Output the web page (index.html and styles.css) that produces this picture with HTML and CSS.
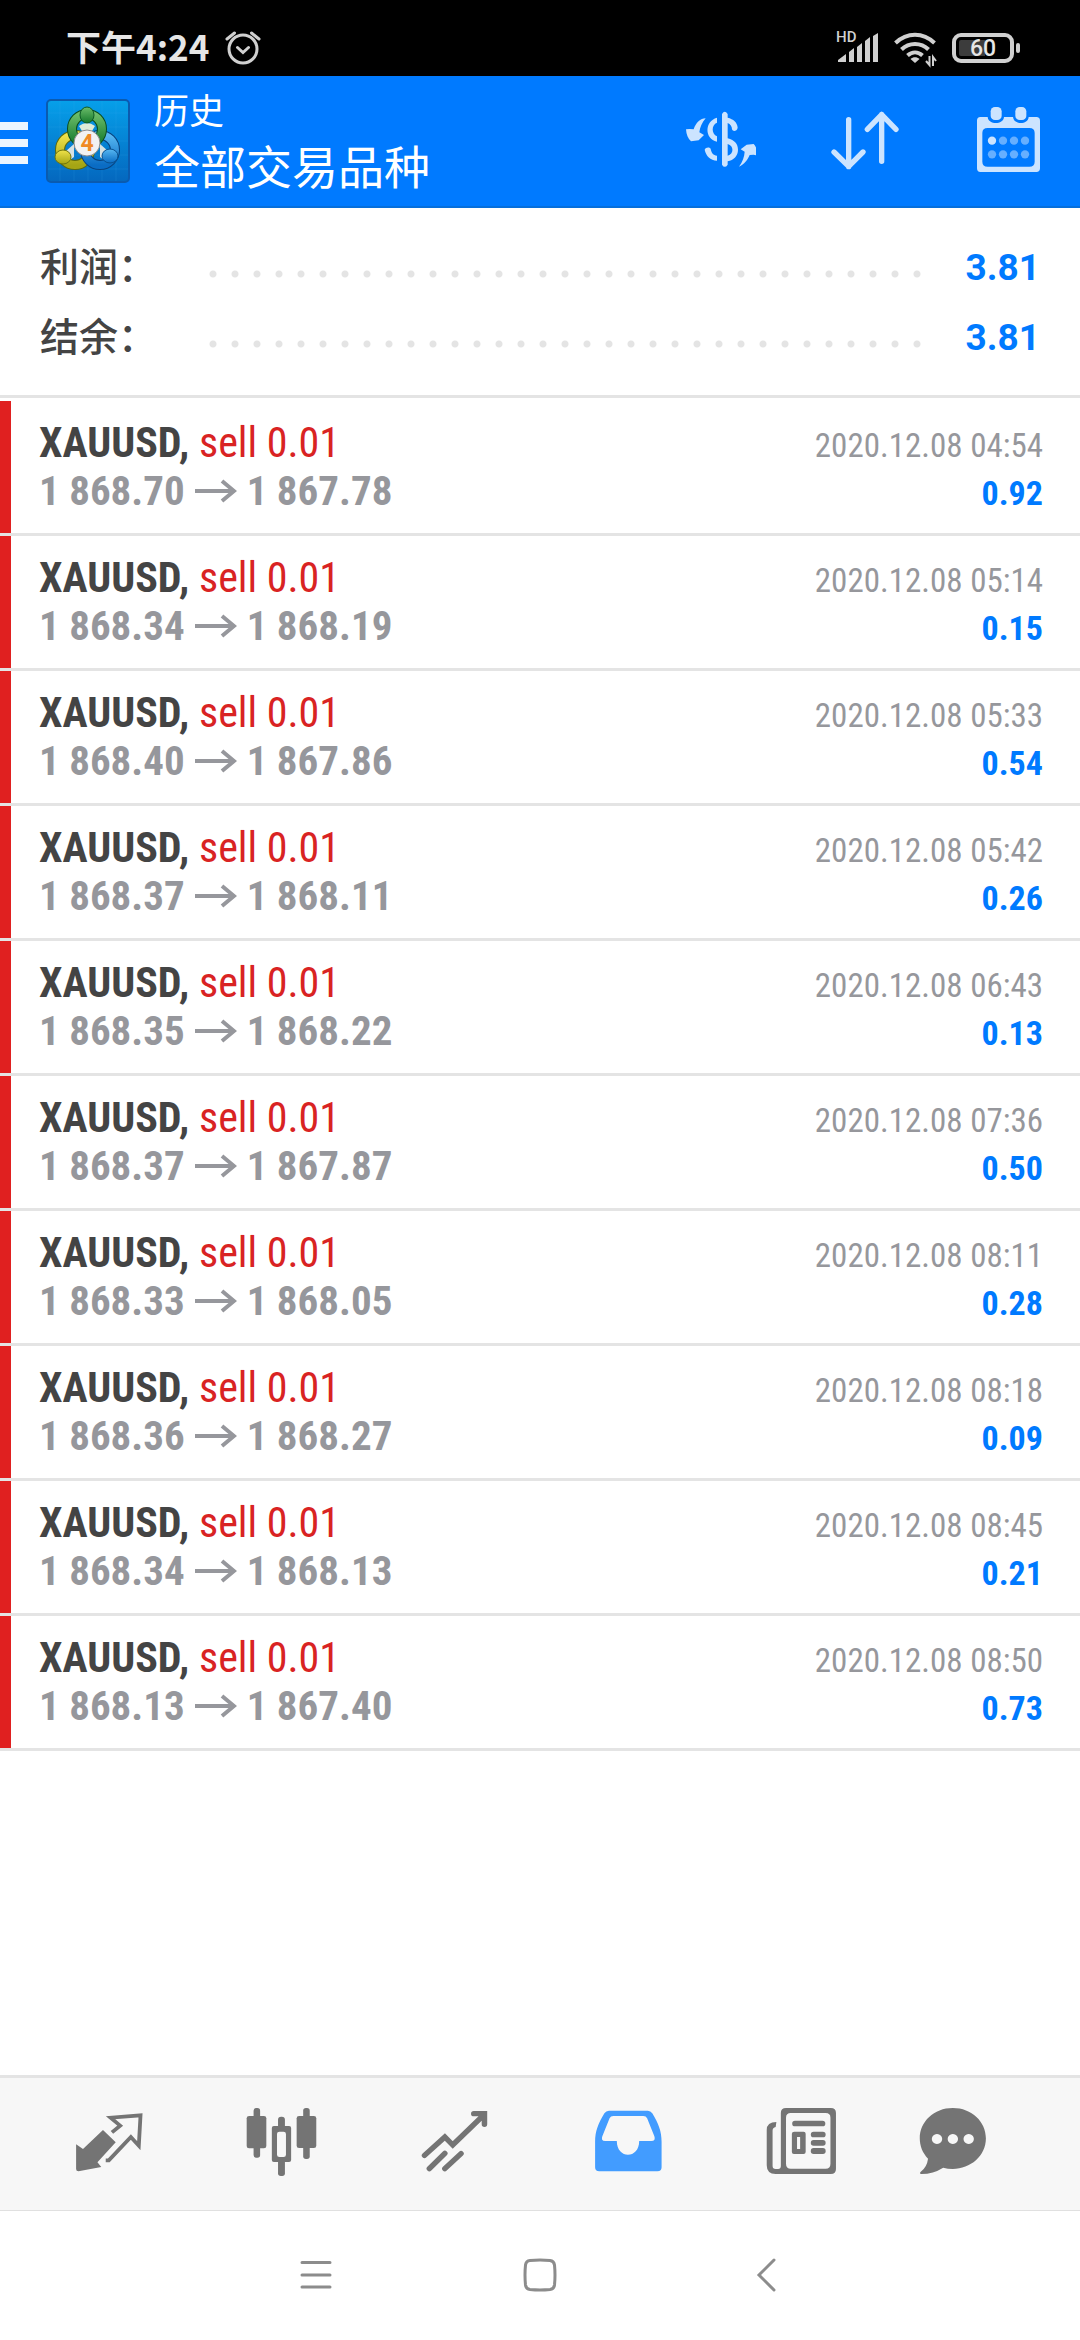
FILE: index.html
```html
<!DOCTYPE html>
<html lang="zh-CN">
<head>
<meta charset="utf-8">
<meta name="viewport" content="width=device-width, initial-scale=1">
<title>历史</title>
<link rel="stylesheet" href="styles.css">
</head>
<body>
<svg class="defs" aria-hidden="true">
  <symbol id="arrow" viewBox="0 0 42 24">
    <path d="M0 12H39M27 2L39 12L27 22" fill="none" stroke="currentColor" stroke-width="4"/>
  </symbol>
</svg>
<div class="screen">
  <div class="status">
    <span class="clock">下午4:24</span>
    <svg class="alarm" viewBox="0 0 36 36" fill="none" stroke="#d0d0d0" stroke-width="3" stroke-linecap="round">
      <circle cx="18" cy="19" r="14"/>
      <path d="M12.500 17.500L18 22.500L23.500 17.500M2 9L9.500 3M26.500 3L34 9"/>
    </svg>
    <div class="indicators">
      <svg class="signal" viewBox="0 0 43 40" fill="#d0d0d0">
        <text class="hd" x="0" y="14">HD</text>
        <path d="M2 32L10 26V34H2ZM13 24L18 20V34H13ZM21 19L26 15V34H21ZM29 13L34 9V34H29ZM37 8L42 5V34H37Z"/>
      </svg>
      <svg class="wifi" viewBox="0 0 43 40" fill="none" stroke="#d0d0d0" stroke-width="4">
        <path d="M1.500 15C13 4 29 4 40.500 15M7.500 21.500C15 14 27 14 34.500 21.500M13.500 27.500C18 23.500 24 23.500 28.500 27.500"/>
        <path d="M21 35L16.500 31C19 28.500 23 28.500 25.500 31Z" fill="#d0d0d0" stroke="none"/>
        <path d="M35.500 28V37L32 33M39 38V29L42 33" stroke-width="2"/>
      </svg>
      <svg class="battery" viewBox="0 0 69 40">
        <rect x="2" y="7" width="58" height="26" rx="7" fill="none" stroke="#d0d0d0" stroke-width="4"/>
        <path d="M9 12H33V28H9Q7 28 7 26V14Q7 12 9 12Z" fill="#3c3c3c"/>
        <rect x="64" y="15" width="4" height="10" rx="2" fill="#d0d0d0"/>
        <text class="level" x="31" y="28" text-anchor="middle">60</text>
      </svg>
    </div>
  </div>

  <header class="appbar">
    <button class="menu" aria-label="菜单"><span></span><span></span><span></span></button>
    <svg class="logo" viewBox="0 0 84 84">
      <defs>
        <linearGradient id="sky" x1="0" y1="0" x2="0" y2="1"><stop offset="0" stop-color="#06a0ea"/><stop offset="1" stop-color="#0467be"/></linearGradient>
        <linearGradient id="green" x1="0" y1="0" x2="0" y2="1"><stop offset="0" stop-color="#6cbd6a"/><stop offset="1" stop-color="#157a2c"/></linearGradient>
        <linearGradient id="yellow" x1="0" y1="0" x2="0" y2="1"><stop offset="0" stop-color="#f0e24a"/><stop offset="1" stop-color="#a5a514"/></linearGradient>
        <linearGradient id="blue" x1="0" y1="0" x2="0" y2="1"><stop offset="0" stop-color="#58b8f2"/><stop offset="1" stop-color="#0a6cc4"/></linearGradient>
      </defs>
      <rect x="1" y="1" width="82" height="82" rx="4" fill="url(#sky)" stroke="#0a5bb0" stroke-width="2"/>
      <path d="M14 2V82M28 2V82M42 2V82M56 2V82M70 2V82M2 14H82M2 28H82M2 42H82M2 56H82M2 70H82" stroke="#4ab8f5" stroke-opacity=".15"/>
      <g fill="none">
        <circle cx="29" cy="51" r="15" stroke="#5c6a10" stroke-width="10"/>
        <circle cx="29" cy="51" r="15" stroke="url(#yellow)" stroke-width="8"/>
        <circle cx="54" cy="51" r="15" stroke="#08427e" stroke-width="10"/>
        <circle cx="54" cy="51" r="15" stroke="url(#blue)" stroke-width="8"/>
        <circle cx="41" cy="30" r="15" stroke="#0b4d20" stroke-width="10"/>
        <circle cx="41" cy="30" r="15" stroke="url(#green)" stroke-width="8"/>
      </g>
      <path d="M33 27Q41 21 49 27L46 32H36Z" fill="#dcebd8"/>
      <path d="M20 52L28 45V58L24 61ZM62 52L54 45V58L58 61Z" fill="#d6e2e4"/>
      <ellipse cx="17" cy="58" rx="8" ry="7" fill="url(#yellow)" stroke="#6d7510"/>
      <ellipse cx="64" cy="57" rx="8" ry="7" fill="url(#blue)" stroke="#08508f"/>
      <ellipse cx="41" cy="16" rx="7" ry="8" fill="url(#green)" stroke="#0d5a26"/>
      <circle cx="41" cy="44" r="13" fill="#f2f2f2" stroke="#8c8c8c" stroke-width="1"/>
      <text class="four" x="41" y="52" text-anchor="middle">4</text>
    </svg>
    <div class="titles">
      <span class="section">历史</span>
      <h1>全部交易品种</h1>
    </div>
    <div class="actions">
      <button aria-label="货币">
        <svg viewBox="132 318 216 216" fill="#cce4ff">
          <path d="M197 358C181 358 168 371 161 391L149 390L138 391C139 407 144 419 153 427L176 424L192 408L178 400C180 384 186 371 197 358Z"/>
          <path d="M297 503C313 496 323 483 329 468L341 467L353 470C353 456 348 441 341 435L320 437L302 451L314 458C313 473 308 488 297 503Z"/>
          <path d="M231 356V371C214 377 214 405 231 412V428C193 420 193 366 231 356ZM231 485C211 484 198 471 194 452C197 444 208 443 212 449C214 461 220 469 231 470Z"/>
          <path fill-rule="evenodd" d="M246 345Q254 332 263 345V356C280 360 292 370 293 386C291 397 279 399 276 391C276 382 271 375 263 372V418C284 423 294 436 294 452C294 471 281 483 263 487V497Q254 510 246 497ZM263 435V470C282 466 282 440 263 435Z"/>
        </svg>
      </button>
      <button aria-label="排序">
        <svg viewBox="564 318 216 216" fill="none" stroke="#cce4ff" stroke-width="16" stroke-linecap="round" stroke-linejoin="round">
          <path d="M626 362V503M582 459L626 502L669 459M725 487V346M682 391L725 347L768 391"/>
        </svg>
      </button>
      <button aria-label="日期">
        <svg viewBox="996 318 216 216" fill="#cce4ff">
          <path fill-rule="evenodd" d="M1021 354H1043C1045 378 1090 378 1092 354H1119C1121 378 1164 378 1166 354H1189Q1200 354 1200 365V508Q1200 519 1189 519H1021Q1011 519 1011 508V365Q1011 354 1021 354ZM1043 387Q1027 387 1027 402V488Q1027 503 1043 503H1168Q1184 503 1184 488V402Q1184 387 1168 387Z"/>
          <rect x="1052" y="324" width="33" height="39" rx="13"/><rect x="1126" y="324" width="33" height="39" rx="13"/>
          <circle cx="1056" cy="425" r="12.500"/>
          <g fill="#66afff"><circle cx="1089" cy="425" r="12.500"/><circle cx="1122" cy="425" r="12.500"/><circle cx="1155" cy="425" r="12.500"/><circle cx="1056" cy="466" r="12.500"/><circle cx="1089" cy="466" r="12.500"/><circle cx="1122" cy="466" r="12.500"/><circle cx="1155" cy="466" r="12.500"/></g>
        </svg>
      </button>
    </div>
  </header>

  <dl class="summary">
    <div><dt>利润：</dt><dd>3.81</dd></div>
    <div><dt>结余：</dt><dd>3.81</dd></div>
  </dl>

  <ul class="deals">
    <li><p><span class="deal"><b>XAUUSD,</b> sell 0.01</span><time>2020.12.08 04:54</time></p><p><span class="price">1 868.70<svg><use href="#arrow"/></svg>1 867.78</span><span class="profit">0.92</span></p></li>
    <li><p><span class="deal"><b>XAUUSD,</b> sell 0.01</span><time>2020.12.08 05:14</time></p><p><span class="price">1 868.34<svg><use href="#arrow"/></svg>1 868.19</span><span class="profit">0.15</span></p></li>
    <li><p><span class="deal"><b>XAUUSD,</b> sell 0.01</span><time>2020.12.08 05:33</time></p><p><span class="price">1 868.40<svg><use href="#arrow"/></svg>1 867.86</span><span class="profit">0.54</span></p></li>
    <li><p><span class="deal"><b>XAUUSD,</b> sell 0.01</span><time>2020.12.08 05:42</time></p><p><span class="price">1 868.37<svg><use href="#arrow"/></svg>1 868.11</span><span class="profit">0.26</span></p></li>
    <li><p><span class="deal"><b>XAUUSD,</b> sell 0.01</span><time>2020.12.08 06:43</time></p><p><span class="price">1 868.35<svg><use href="#arrow"/></svg>1 868.22</span><span class="profit">0.13</span></p></li>
    <li><p><span class="deal"><b>XAUUSD,</b> sell 0.01</span><time>2020.12.08 07:36</time></p><p><span class="price">1 868.37<svg><use href="#arrow"/></svg>1 867.87</span><span class="profit">0.50</span></p></li>
    <li><p><span class="deal"><b>XAUUSD,</b> sell 0.01</span><time>2020.12.08 08:11</time></p><p><span class="price">1 868.33<svg><use href="#arrow"/></svg>1 868.05</span><span class="profit">0.28</span></p></li>
    <li><p><span class="deal"><b>XAUUSD,</b> sell 0.01</span><time>2020.12.08 08:18</time></p><p><span class="price">1 868.36<svg><use href="#arrow"/></svg>1 868.27</span><span class="profit">0.09</span></p></li>
    <li><p><span class="deal"><b>XAUUSD,</b> sell 0.01</span><time>2020.12.08 08:45</time></p><p><span class="price">1 868.34<svg><use href="#arrow"/></svg>1 868.13</span><span class="profit">0.21</span></p></li>
    <li><p><span class="deal"><b>XAUUSD,</b> sell 0.01</span><time>2020.12.08 08:50</time></p><p><span class="price">1 868.13<svg><use href="#arrow"/></svg>1 867.40</span><span class="profit">0.73</span></p></li>
  </ul>

  <nav class="tabs">
    <button aria-label="行情">
      <svg viewBox="210 144 209 216" preserveAspectRatio="none">
        <path d="M297 210L334 247L281 307L292 321L226 334Q219 334 219 327V253L239 267Z"/>
        <path d="M323 217L347 197L319 173L406 166L401 257L378 231L314 301L305 301" fill="none" stroke="#747474" stroke-width="11"/>
      </svg>
    </button>
    <button aria-label="图表">
      <svg viewBox="713 144 209 216" preserveAspectRatio="none">
        <rect x="735" y="144" width="19" height="149" rx="8"/><rect x="715" y="168" width="57" height="97" rx="7"/>
        <rect x="879" y="144" width="19" height="153" rx="8"/><rect x="860" y="168" width="57" height="96" rx="7"/>
        <rect x="806" y="170" width="20" height="40" rx="9"/><rect x="806" y="295" width="20" height="53" rx="8"/>
        <path fill-rule="evenodd" d="M794 198H838Q844 198 844 204V300Q844 306 838 306H794Q788 306 788 300V204Q788 198 794 198ZM810 215Q803 215 803 222V284Q803 291 810 291H822Q829 291 829 284V222Q829 215 822 215Z"/>
      </svg>
    </button>
    <button aria-label="交易">
      <svg class="line" viewBox="1215 144 209 216" preserveAspectRatio="none">
        <path stroke-linecap="round" d="M1231 286L1290 231L1313 255L1404 164M1374 161H1405V193M1245 326L1290 280M1290 326L1337 281"/>
      </svg>
    </button>
    <button class="active" aria-label="历史">
      <svg viewBox="149 144 209 216" preserveAspectRatio="none">
        <path fill-rule="evenodd" d="M198 152H311Q319 152 324 160C342 190 351 215 351 245V322Q351 334 339 334H170Q158 334 158 322V245C158 215 167 190 185 160Q190 152 198 152ZM211 168Q203 168 200 175L179 229Q174 243 187 243H221C221 298 286 298 286 243H321Q335 243 330 229L309 175Q306 168 298 168Z"/>
      </svg>
    </button>
    <button aria-label="新闻">
      <svg viewBox="652 144 209 216" preserveAspectRatio="none">
        <path fill-rule="evenodd" d="M713 144H843Q858 144 858 159V327Q858 342 843 342H683Q657 342 657 316V210Q657 186 685 186L683 201Q674 203 674 212V318Q674 327 683 327H690Q698 327 698 318V159Q698 144 713 144ZM727 159Q713 159 713 173V311Q713 326 727 326H828Q842 326 842 311V173Q842 159 828 159Z"/>
        <rect x="731" y="182" width="96" height="17" rx="8"/>
        <path fill-rule="evenodd" d="M737 215H764Q770 215 770 221V276Q770 282 764 282H736Q730 282 730 276V221Q730 215 737 215ZM745 231V267H754V231Z"/>
        <rect x="785" y="215" width="43" height="17" rx="8"/><rect x="785" y="240" width="43" height="17" rx="8"/><rect x="785" y="264" width="43" height="18" rx="8"/>
      </svg>
    </button>
    <button aria-label="消息">
      <svg viewBox="1095 144 209 216" preserveAspectRatio="none">
        <path fill-rule="evenodd" d="M1199 144C1254 144 1295 185 1295 235C1295 288 1250 327 1199 327Q1184 327 1171 323Q1142 342 1108 342Q1100 341 1106 335Q1124 321 1127 296C1111 279 1103 258 1103 235C1103 185 1144 144 1199 144ZM1153 222a15 15 0 1 0 .1 0ZM1199 222a15 15 0 1 0 .1 0ZM1245 222a15 15 0 1 0 .1 0Z"/>
      </svg>
    </button>
  </nav>

  <nav class="system">
    <button aria-label="最近任务"><svg viewBox="0 0 36 36"><path d="M5 5.500H33M5 18H33M5 30H33"/></svg></button>
    <button aria-label="主屏幕"><svg viewBox="0 0 36 36"><path d="M8 3.500Q18 2.500 28 3.500Q32 4 32.500 8Q33.500 18 32.500 28Q32 32 28 32.500Q18 33.500 8 32.500Q4 32 3.500 28Q2.500 18 3.500 8Q4 4 8 3.500Z"/></svg></button>
    <button aria-label="返回"><svg viewBox="0 0 36 36"><path d="M27 3L12 18L27 33"/></svg></button>
  </nav>
</div>
</body>
</html>
```
FILE: styles.css
```css
* { box-sizing: border-box; margin: 0; padding: 0; }

body {
  background: #fff;
  color: #444;
  font-family: Roboto, "Noto Sans CJK SC", sans-serif;
}

button {
  display: flex;
  align-items: center;
  justify-content: center;
  border: 0;
  background: none;
}

svg { display: block; flex: none; }
.defs { position: absolute; width: 0; height: 0; }

.screen {
  display: flex;
  flex-direction: column;
  min-height: 100vh;
}

/* Phone status bar */
.status {
  display: flex;
  align-items: center;
  height: 76px;
  padding: 20px 59px 0 66px;
  background: #000;
}
.clock {
  padding-bottom: 4px;
  color: #e6e6e6;
  font: 700 35px/40px "Noto Sans CJK SC", sans-serif;
}
.alarm { width: 36px; height: 36px; margin-left: 16px; }
.indicators { display: flex; gap: 15px; margin-left: auto; }
.signal, .wifi { width: 43px; height: 40px; }
.battery { width: 69px; height: 40px; }
.hd { font: 500 15px Roboto, sans-serif; }
.level { fill: #e6e6e6; font: 500 23px Roboto, sans-serif; }

/* Title bar */
.appbar {
  display: flex;
  align-items: center;
  height: 132px;
  padding-right: 36px;
  border-bottom: 2px solid #066fdb;
  background: #007aff;
  color: #fff;
}
.menu {
  flex-direction: column;
  align-items: stretch;
  gap: 9px;
  width: 28px;
  padding-top: 4px;
}
.menu span { height: 8px; background: #ebf5ff; }
.logo { width: 84px; height: 84px; margin-left: 18px; }
.four { fill: #f08a24; font: 700 23px Roboto, sans-serif; }
.titles { margin-left: 24px; padding-bottom: 2px; font-family: "Noto Sans CJK SC", sans-serif; }
.section { display: block; font-size: 35px; line-height: 48px; }
.titles h1 { font-size: 46px; font-weight: 400; line-height: 62px; }
.actions { display: flex; gap: 72px; margin-left: auto; }
.actions svg { width: 72px; height: 72px; }

/* Profit and balance */
.summary { padding: 24px 40px 23px; border-bottom: 3px solid #e4e4e4; }
.summary div { display: flex; height: 70px; }
.summary dt {
  width: 162px;
  font: 500 39px/64px "Noto Sans CJK SC", sans-serif;
}
.summary dd {
  flex: 1;
  color: #007aff;
  font-size: 37px;
  font-weight: 700;
  line-height: 72px;
  text-align: right;
}
/* Dotted leader between label and amount */
.summary dd::before {
  content: "";
  float: left;
  width: calc(100% - 110px);
  height: 70px;
  background: radial-gradient(circle at 11px 42px, #e4e4e4 3px, transparent 4px) 0 0 / 22px 70px repeat-x;
}

/* Closed deals */
.deals {
  flex: 1;
  padding-top: 3px;
  list-style: none;
  font-family: "Roboto Condensed", Roboto, sans-serif;
}
.deals li {
  padding: 18px 37px 18px 39px;
  border-bottom: 3px solid #e4e4e4;
  background: linear-gradient(#e02020, #e02020) 0 0 / 11px 100% no-repeat padding-box;
}
.deals p {
  display: flex;
  align-items: baseline;
  justify-content: space-between;
  height: 48px;
  line-height: 48px;
}
.deal { color: #d92323; font-size: 42px; }
.deal b { color: #444; }
.price { display: flex; align-items: baseline; color: #96979c; font-size: 41px; font-weight: 700; }
.price svg { align-self: center; width: 42px; height: 24px; margin: 0 10px; }
.deals time { color: #96979c; font-size: 33px; }
.profit { color: #007aff; font-size: 34px; font-weight: 700; }

/* Bottom tabs */
.tabs {
  display: grid;
  grid-template-columns: repeat(5, 173fr) 132fr;
  height: 136px;
  padding: 0 61px 0 22px;
  border-top: 3px solid #e4e4e4;
  border-bottom: 1px solid #e0e0e0;
  background: #f7f7f7;
}
.tabs svg { width: 72px; height: 72px; fill: #747474; }
.tabs .line { fill: none; stroke: #747474; stroke-width: 16; }
.tabs .active svg { fill: #429cff; }

/* Phone navigation keys */
.system {
  display: flex;
  justify-content: center;
  gap: 189px;
  height: 129px;
  padding-bottom: 2px;
}
.system svg { width: 36px; height: 36px; fill: none; stroke: #8c8c8c; stroke-width: 3; stroke-linecap: round; }
```
